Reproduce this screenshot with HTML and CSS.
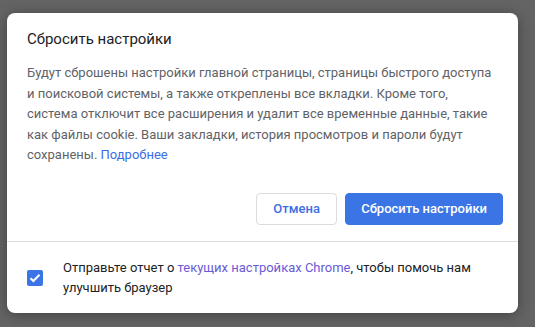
FILE: index.html
```html
<!DOCTYPE html>
<html lang="ru">
<head>
<meta charset="utf-8">
<link rel="stylesheet" href="styles.css">
</head>
<body>
<div class="dialog">
  <div class="main">
    <div class="title">Сбросить настройки</div>
    <div class="body">Будут сброшены настройки главной страницы, страницы быстрого доступа и поисковой системы, а также откреплены все вкладки. Кроме того, система отключит все расширения и удалит все временные данные, такие как файлы cookie. Ваши закладки, история просмотров и пароли будут сохранены. <a class="more" href="#">Подробнее</a></div>
    <div class="buttons">
      <button class="btn cancel">Отмена</button>
      <button class="btn action">Сбросить настройки</button>
    </div>
  </div>
  <div class="footer">
    <span class="check"><svg width="12" height="10" viewBox="0 0 12 10"><path d="M1.5 5.2 L4.4 8 L10.5 1.8" fill="none" stroke="#fff" stroke-width="2"/></svg></span>
    <div class="ftext">Отправьте отчет о <a class="vlink" href="#">текущих настройках Chrome</a>, чтобы помочь нам улучшить браузер</div>
  </div>
</div>
</body>
</html>
```
FILE: styles.css
```css
html, body { margin: 0; height: 100%; }
body {
  background: #646464;
  font-family: Roboto, "Noto Sans", Arial, sans-serif;
  padding: 13px 0 0 7px;
  box-sizing: border-box;
}
.dialog {
  width: 511px;
  background: #fff;
  border-radius: 8px;
  box-shadow: 0 2px 14px rgba(0,0,0,0.35);
}
.main {
  padding: 16px 15px 16px 20px;
  border-bottom: 1px solid #dadce0;
}
.title {
  font-size: 15px;
  line-height: 20px;
  color: #202124;
}
.body {
  margin-top: 14px;
  font-size: 13px;
  line-height: 20.5px;
  color: #5f6368;
  padding-right: 10px;
}
a { text-decoration: none; }
.more { color: #3b6ee0; }
.vlink { color: #6a5ad6; }
.buttons {
  display: flex;
  justify-content: flex-end;
  gap: 8px;
  margin-top: 27px;
}
.btn {
  font-family: inherit;
  font-size: 13px;
  font-weight: 500;
  height: 32px;
  border-radius: 4px;
  padding: 0 15px;
  white-space: nowrap;
  cursor: pointer;
}
.cancel {
  background: #fff;
  border: 1px solid #dadce0;
  color: #3d6fe3;
  min-width: 81px;
}
.action {
  background: #3b74e5;
  border: 1px solid #3b74e5;
  color: #fff;
}
.footer {
  display: flex;
  align-items: center;
  padding: 16px 20px 15px 20px;
  gap: 20px;
}
.check {
  flex: none;
  width: 16px;
  height: 16px;
  border-radius: 2px;
  background: #3b74e5;
  display: flex;
  align-items: center;
  justify-content: center;
}
.ftext {
  font-size: 13px;
  line-height: 20px;
  color: #202124;
}
```
